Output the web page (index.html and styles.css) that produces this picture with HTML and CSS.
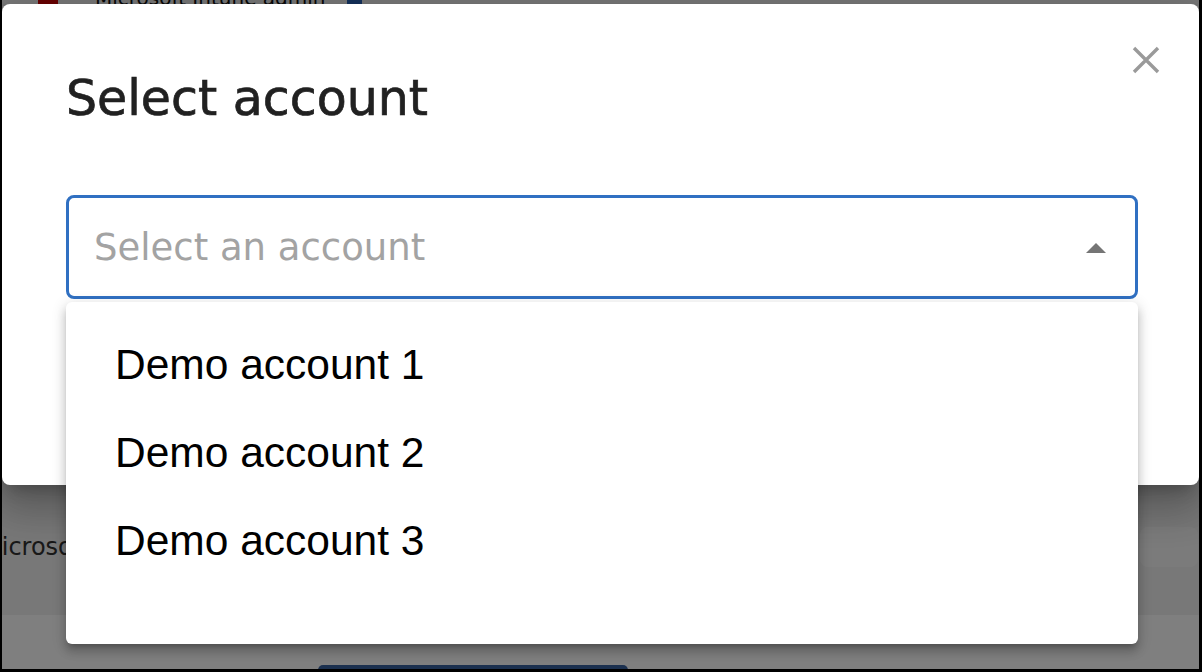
FILE: index.html
```html
<!DOCTYPE html>
<html lang="en">
<head>
<meta charset="utf-8">
<title>Select account</title>
<link rel="stylesheet" href="styles.css">
</head>
<body>
<div class="frame">
  <div class="screen">
    <div class="page">
      <div class="hdr">
        <div class="hdr-logo"></div>
        <div class="hdr-title">Microsoft Intune admin</div>
        <div class="hdr-icon"></div>
      </div>
      <div class="section">
        <div class="row">
          <div class="row-text">Microsoft</div>
          <div class="row-box"></div>
        </div>
      </div>
      <div class="lower">
        <div class="lower-btn"></div>
      </div>
    </div>
    <div class="backdrop"></div>
    <div class="modal">
      <button class="close" aria-label="Close">
        <svg width="28" height="28" viewBox="0 0 28 28"><path d="M2 2 L26 26 M26 2 L2 26" stroke="#9a9a9a" stroke-width="3.4" fill="none"/></svg>
      </button>
      <h2 class="title">Select account</h2>
      <div class="select">
        <span class="placeholder">Select an account</span>
        <span class="caret"></span>
      </div>
    </div>
    <ul class="menu">
      <li class="item">Demo account 1</li>
      <li class="item">Demo account 2</li>
      <li class="item">Demo account 3</li>
    </ul>
  </div>
</div>
</body>
</html>
```
FILE: styles.css
```css
html, body {
  margin: 0;
  padding: 0;
  background: #000;
}
.frame {
  width: 1202px;
  height: 672px;
  box-sizing: border-box;
  padding: 0 3px 3px 2px;
  background: #000;
}
.screen {
  position: relative;
  width: 1197px;
  height: 669px;
  overflow: hidden;
  background: #fff;
  font-family: "DejaVu Sans", sans-serif;
}
.page {
  display: flex;
  flex-direction: column;
  height: 100%;
}
.hdr {
  height: 4px;
  flex: none;
  overflow: hidden;
  display: flex;
  align-items: flex-end;
  background: #f2f2f2;
}
.hdr-logo {
  width: 20px;
  height: 20px;
  margin-left: 36px;
  background: #d40000;
  flex: none;
}
.hdr-title {
  margin-left: 37px;
  margin-bottom: -4px;
  font-size: 20px;
  line-height: 20px;
  color: #111;
  white-space: nowrap;
  flex: none;
}
.hdr-icon {
  width: 15px;
  height: 16px;
  margin-left: 22px;
  background: #2b62b8;
  flex: none;
}
.section {
  flex: none;
  height: 611px;
  box-sizing: border-box;
  padding-top: 523px;
  background: #f0f0f0;
}
.row {
  display: flex;
  justify-content: space-between;
  align-items: center;
  height: 40px;
  padding-right: 1px;
}
.row-text {
  margin-left: -21px;
  font-size: 24px;
  color: #333;
  white-space: nowrap;
}
.row-box {
  width: 58px;
  height: 40px;
  border-radius: 8px;
  background: #f7f7f7;
}
.lower {
  flex: 1;
  background: #fff;
  padding-top: 50px;
  padding-left: 316px;
}
.lower-btn {
  width: 310px;
  height: 40px;
  border-radius: 5px;
  background: #36609e;
}
.backdrop {
  position: absolute;
  inset: 0;
  background: rgba(0, 0, 0, 0.5);
}
.modal {
  position: absolute;
  top: 4px;
  left: 0;
  width: 1197px;
  height: 481px;
  box-sizing: border-box;
  padding: 70px 61px 0 64px;
  background: #fff;
  border-radius: 8px;
  box-shadow: 0 11px 15px -7px rgba(0,0,0,.22), 0 24px 38px 3px rgba(0,0,0,.16), 0 9px 46px 8px rgba(0,0,0,.14);
}
.close {
  position: absolute;
  top: 42px;
  right: 39px;
  width: 28px;
  height: 28px;
  padding: 0;
  border: 0;
  background: transparent;
  display: flex;
}
.title {
  margin: 0;
  font-family: "DejaVu Sans", sans-serif;
  font-weight: normal;
  font-size: 49px;
  line-height: 1;
  color: #212121;
  -webkit-text-stroke: 0.7px #212121;
}
.select {
  margin-top: 72px;
  height: 104px;
  box-sizing: border-box;
  border: 3px solid #3070c2;
  border-radius: 8px;
  display: flex;
  align-items: center;
  justify-content: space-between;
  padding: 1px 29px 0 25px;
}
.placeholder {
  font-size: 37px;
  color: #a3a3a3;
  white-space: nowrap;
}
.caret {
  width: 0;
  height: 0;
  border-left: 10px solid transparent;
  border-right: 10px solid transparent;
  border-bottom: 10px solid #757575;
}
.menu {
  position: absolute;
  top: 302px;
  left: 64px;
  width: 1072px;
  height: 342px;
  box-sizing: border-box;
  margin: 0;
  padding: 19px 0 59px 0;
  list-style: none;
  background: #fff;
  border-radius: 6px;
  box-shadow: 0 5px 5px -3px rgba(0,0,0,.2), 0 8px 10px 1px rgba(0,0,0,.14), 0 3px 14px 2px rgba(0,0,0,.12);
}
.item {
  padding-left: 49px;
  font-family: "Liberation Sans", Arial, sans-serif;
  font-size: 42.5px;
  line-height: 88px;
  height: 88px;
  color: #000;
  white-space: nowrap;
}
```
